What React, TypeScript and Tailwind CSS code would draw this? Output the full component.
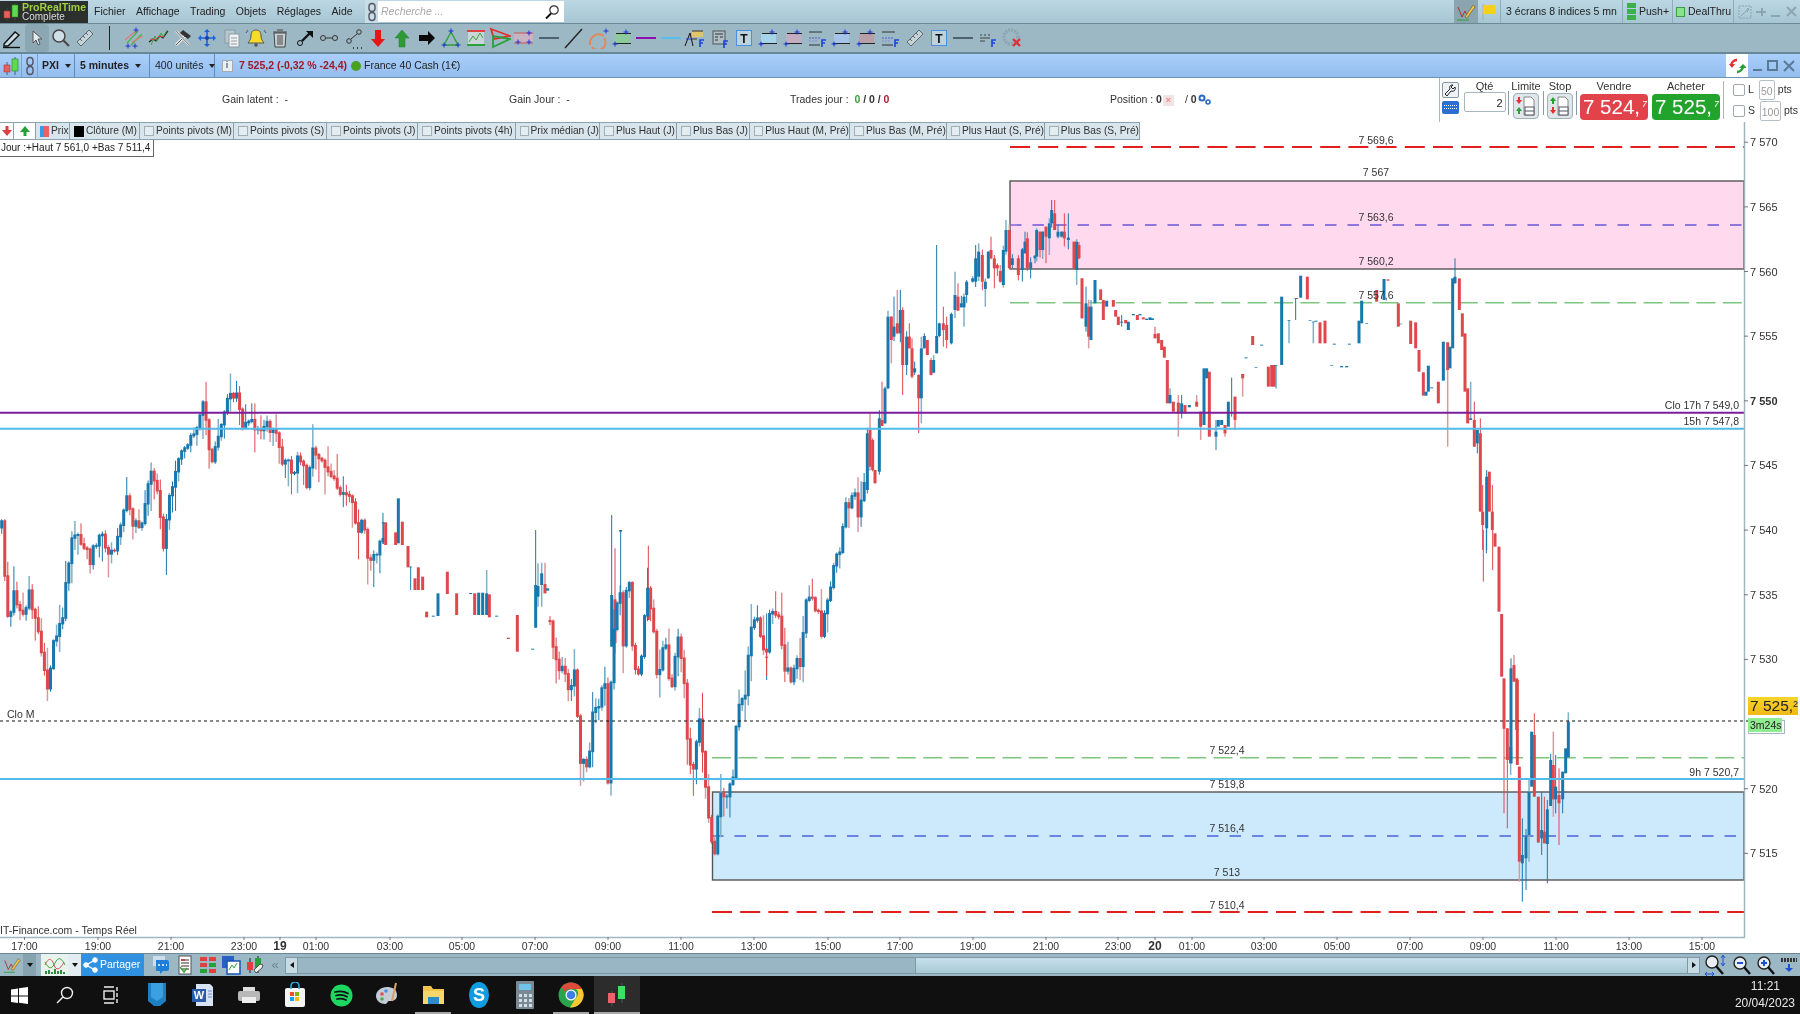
import React from "react";

type Raw = [number, number, number, number, number?, number?];
type Candle = { x: number; t: number; b: number; c: number; wt?: number; wb?: number; pale?: boolean };

let seed = 12345;
const rnd = () => {
  seed = (seed * 1664525 + 1013904223) % 4294967296;
  return seed / 4294967296;
};

const conv = (ox: number, oy: number, rows: Raw[], randomWick = false): Candle[] =>
  rows.map(([zx, t, b, c, wt, wb]) => {
    const y1 = oy + t / 3;
    const y2 = oy + b / 3;
    const r1 = rnd();
    const r2 = rnd();
    return {
      x: ox + zx / 3,
      t: y1,
      b: y2,
      c,
      wt: wt !== undefined ? oy + wt / 3 : randomWick ? y1 - r1 * r1 * 9 : undefined,
      wb: wb !== undefined ? oy + wb / 3 : randomWick ? y2 + r2 * r2 * 9 : undefined,
      pale: rnd() < 0.4,
    };
  });

const anchors: [number, number][] = [
  [1.7, 527], [5, 573], [8, 617], [15, 587], [22, 623], [30, 593], [37, 623], [48, 693], [53, 637], [62, 620], [67, 567], [73, 537], [83, 540], [90, 557], [100, 527], [110, 560], [117, 537], [127, 500], [133, 530], [143, 520], [150, 473], [158, 493], [163, 553], [170, 493], [180, 447], [193, 433], [204, 403], [210, 460], [217, 443], [227, 403], [235, 390], [242, 420], [257, 423], [277, 432], [283, 460], [293, 467], [303, 457], [307, 487], [313, 443], [328, 470], [340, 487], [350, 497], [358, 533], [363, 510], [368, 553], [375, 557], [385, 530],
];
const anchors2: [number, number][] = [
  [550, 620], [553, 650], [557, 663], [563, 667], [570, 700], [575, 667], [580, 757], [585, 767], [588, 770], [590, 747], [593, 700], [595, 713], [600, 697], [605, 683], [608, 780], [612, 647], [617, 597], [620, 593], [623, 643], [627, 580], [630, 580], [633, 660], [637, 663], [640, 680], [643, 640], [647, 587], [650, 607], [652, 603], [655, 640], [658, 697], [662, 647], [667, 642], [670, 690], [673, 673], [677, 637], [679, 630], [682, 663], [685, 687], [688, 747], [692, 780], [695, 747], [698, 720], [700, 727], [703, 753], [705, 780], [707, 797], [710, 840], [713, 843], [716, 867], [718, 813], [722, 790], [725, 810], [730, 790], [733, 773], [737, 720], [740, 697], [743, 700], [745, 697], [748, 650], [752, 620], [757, 612], [762, 637], [767, 657], [770, 613], [775, 610], [780, 623], [783, 670], [788, 663], [792, 693], [795, 650], [800, 673], [805, 602], [810, 603], [818, 607], [822, 633], [828, 598], [832, 583], [837, 547], [840, 557], [845, 500], [848, 510], [853, 483], [858, 523], [862, 500], [865, 480],
];

const fromAnchors = (list: [number, number][]): Candle[] => {
  const out: Candle[] = [];
  let prev = list[0][1];
  const x0 = list[0][0];
  const x1 = list[list.length - 1][0];
  let j = 0;
  for (let x = x0; x <= x1; x += 3.05) {
    while (j < list.length - 2 && list[j + 1][0] < x) j++;
    const [ax, ay] = list[j];
    const [bx, by] = list[j + 1];
    const y = ay + ((by - ay) * (x - ax)) / Math.max(bx - ax, 0.1) + (rnd() - 0.5) * 14;
    const t = Math.min(prev, y);
    const b = Math.max(prev, y) + 1.5;
    const r1 = rnd();
    const r2 = rnd();
    out.push({ x, t, b, c: y < prev ? 1 : 0, wt: t - r1 * r1 * r1 * 26 - 1, wb: b + r2 * r2 * r2 * 26 + 1, pale: rnd() < 0.45 });
    prev = y;
  }
  return out;
};

const candles: Candle[] = [
  ...fromAnchors(anchors),
  ...conv(0, 360, [
    [1157, 487, 555, 0], [1150, 487, 490, 1, undefined, 552], [1195, 415, 550, 1], [1187, 517, 555, 0], [1207, 485, 555, 0], [1224, 558, 622, 0], [1232, 620, 622, 1, undefined, 690], [1245, 655, 690, 0], [1255, 622, 690, 0], [1268, 650, 690, 0], [1280, 755, 772, 0], [1300, 767, 770, 1], [1314, 700, 768, 1], [1342, 635, 702, 0], [1370, 700, 765, 0], [1412, 699, 702, 1], [1424, 700, 765, 0], [1436, 698, 765, 1], [1448, 698, 765, 1], [1460, 700, 765, 1, 630], [1468, 703, 772, 0], [1490, 767, 770, 1],
  ]),
  ...conv(500, 480, [
    [25, 473, 477, 0], [52, 405, 515, 0], [98, 506, 509, 1], [107, 315, 443, 1, 150], [114, 318, 350, 1, 250, 380], [125, 280, 315, 1, 248, 380], [135, 312, 340, 0, 248], [143, 325, 332, 1],
    [335, 345, 500, 1, 105], [345, 358, 490, 0, 205, 520], [362, 150, 155, 1, undefined, 360], [445, 375, 420, 0, 197], [800, 530, 533, 1, 400, 600],
  ]),
  ...fromAnchors(anchors2),
  ...conv(820, 190, [
    [142, 730, 900, 1], [150, 720, 830, 0, 670], [158, 750, 840, 0], [165, 840, 880, 0], [178, 685, 845, 1], [186, 690, 708, 0, 575], [195, 595, 700, 1], [204, 380, 595, 1, 362], [214, 380, 450, 0, undefined, 520], [222, 410, 440, 1, 320], [232, 400, 430, 0, 300], [241, 360, 430, 1, 300], [248, 360, 525, 0, undefined, 615], [260, 440, 525, 1, undefined, 555], [268, 440, 475, 0, 400], [276, 475, 560, 0, 445, 565], [284, 535, 547, 1, 515], [296, 555, 625, 0, undefined, 730], [304, 475, 625, 1, 440, 700], [313, 438, 475, 1, 430], [322, 450, 495, 0], [333, 510, 555, 0], [341, 510, 548, 1], [350, 438, 490, 1, 165], [358, 400, 438, 1], [370, 400, 420, 0, 350, 470], [380, 405, 450, 0, 380, 475], [394, 372, 460, 1], [405, 315, 360, 1, 245], [414, 320, 362, 0, 280], [424, 340, 352, 1], [432, 320, 352, 1, undefined, 410], [440, 275, 315, 1], [458, 265, 275, 1], [467, 205, 275, 1, 165], [476, 185, 260, 1, 160], [487, 195, 275, 0], [496, 275, 297, 1, 265, 350], [505, 185, 265, 1], [513, 180, 205, 0, 140], [523, 205, 235, 0, 195, 295], [532, 225, 235, 0], [541, 243, 275, 0], [550, 180, 285, 1], [558, 120, 185, 1, 90], [568, 120, 235, 0], [577, 205, 225, 1], [595, 205, 255, 0], [607, 178, 240, 1, undefined, 275], [615, 155, 190, 1, 125], [622, 145, 235, 0], [632, 217, 235, 1, undefined, 265], [645, 197, 205, 1], [650, 120, 200, 1], [660, 125, 180, 0], [668, 125, 180, 1], [678, 110, 140, 0, undefined, 220], [688, 100, 145, 1, undefined, 195], [695, 60, 100, 1, 30], [704, 70, 120, 0, 30], [714, 125, 140, 1, undefined, 145], [725, 125, 140, 1], [733, 125, 145, 0, 70], [745, 143, 150, 1, 70, 178], [762, 155, 235, 0], [770, 155, 240, 1, undefined, 285], [777, 165, 205, 0], [786, 265, 385, 0], [798, 340, 410, 1, 290], [806, 350, 440, 0, undefined, 475], [813, 350, 450, 1],
  ], true),
  ...conv(980, 130, [
    [345, 450, 520, 1], [362, 478, 510, 0], [370, 510, 570, 0], [380, 512, 530, 1], [400, 510, 530, 0], [407, 540, 560, 0], [415, 560, 585, 0], [425, 575, 578, 1, 555, 590], [437, 570, 580, 0], [445, 575, 600, 1], [460, 552, 556, 1], [472, 555, 570, 0], [480, 552, 556, 1], [490, 562, 568, 0], [500, 566, 570, 1], [510, 562, 570, 1], [517, 565, 570, 1],
    [525, 612, 625, 0, 590], [535, 610, 640, 0], [545, 630, 660, 0], [553, 650, 683, 0], [562, 690, 820, 0], [570, 795, 820, 1, 775], [580, 815, 845, 0], [595, 818, 850, 0, 795, 920], [605, 820, 850, 1, 795, 865], [615, 825, 850, 0], [628, 825, 832, 1], [650, 815, 830, 0, 795], [662, 845, 890, 0, undefined, 930], [672, 715, 885, 1], [680, 715, 745, 1], [688, 725, 920, 0], [708, 905, 920, 1, 870, 960], [715, 870, 890, 1], [725, 870, 885, 1], [735, 885, 910, 0, undefined, 920], [745, 815, 890, 1], [765, 800, 870, 0, undefined, 900], [788, 732, 745, 0, undefined, 800], [755, 798, 799, 1, 743, 860], [818, 618, 645, 0], [845, 644, 647, 1], [798, 682, 685, 1], [828, 711, 713, 1], [865, 710, 770, 0], [875, 705, 770, 0], [882, 705, 770, 0], [888, 705, 707, 1, undefined, 775], [905, 500, 705, 1], [950, 504, 507, 0], [947, 505, 507, 1, undefined, 570], [927, 570, 572, 1, undefined, 640], [962, 437, 503, 1], [982, 440, 508, 0], [990, 571, 573, 1], [1000, 575, 577, 1, undefined, 640], [1008, 572, 575, 1], [1020, 577, 640, 0], [1035, 572, 640, 0], [1063, 641, 644, 1], [1108, 641, 644, 1], [1055, 706, 708, 1], [1085, 708, 712, 1], [1100, 708, 712, 1], [1137, 572, 640, 1], [1145, 512, 580, 1], [1160, 579, 581, 1], [1190, 480, 515, 0], [1212, 447, 510, 1], [1224, 448, 452, 0], [1255, 520, 590, 0], [1262, 581, 583, 1], [1292, 572, 642, 0], [1307, 577, 655, 0], [1317, 660, 725, 0], [1330, 727, 797, 0], [1338, 785, 797, 1], [1345, 707, 785, 1], [1355, 772, 775, 1], [1375, 755, 820, 0], [1390, 635, 752, 1], [1403, 637, 720, 0, undefined, 950], [1410, 650, 715, 1], [1418, 445, 655, 1], [1425, 440, 460, 1, 385], [1438, 445, 540, 0], [1447, 550, 620, 0], [1455, 610, 785, 0],
  ]),
  ...conv(1420, 250, [
    [143, 415, 520, 0], [152, 505, 510, 1, 395], [163, 510, 590, 0, 455], [172, 540, 580, 1, undefined, 610], [181, 550, 785, 0, 505], [188, 785, 825, 0, 705, 900], [200, 680, 835, 1, 660, 900], [208, 665, 785, 0], [217, 785, 840, 0, 705],
  ]),
  ...conv(1480, 530, [
    [10, 0, 1, 0, undefined, 155], [19, 0, 1, 1, undefined, 70], [38, 0, 1, 0, undefined, 120], [45, 10, 50, 0], [57, 50, 245, 0], [65, 252, 440, 0], [72, 445, 595, 0], [93, 415, 700, 1, 385], [102, 405, 455, 0, 375], [110, 445, 600, 0],
  ]),
  ...conv(1400, 680, [
    [312, 145, 147, 0, undefined, 400], [322, 145, 240, 0, undefined, 445], [332, 200, 250, 1, undefined, 285], [352, 0, 255, 0], [358, 260, 545, 0, undefined, 605], [367, 525, 550, 1, 415, 665], [378, 470, 535, 1, 447, 630], [387, 335, 465, 1, 295, 545], [395, 155, 320, 1], [403, 165, 350, 0, 100], [415, 350, 488, 0], [425, 450, 475, 1, 335, 525], [433, 455, 490, 0, 350], [442, 388, 492, 1, 360, 610], [452, 240, 378, 1, 222], [460, 255, 358, 0, 155, 410], [467, 320, 358, 1, 225, 400], [477, 345, 370, 0, 265, 495], [488, 275, 358, 1, undefined, 400], [497, 205, 280, 1], [505, 125, 232, 1, 97],
  ]),
];

const Plus = ({ x, y }: { x: number; y: number }) => (
  <path d={`M${x - 2.5} ${y}h5M${x} ${y - 2.5}v5`} stroke="#1a35d8" strokeWidth="1" fill="none" />
);
const F = ({ x = 16, y = 20 }: { x?: number; y?: number }) => (
  <path d={`M${x} ${y}v-7h4M${x} ${y - 4}h3`} stroke="#1a45d8" strokeWidth="1.6" fill="none" />
);

const Icon = ({ children, s = 22 }: { children: React.ReactNode; s?: number }) => (
  <svg width={s} height={s} viewBox="0 0 22 22" fill="none">
    {children}
  </svg>
);

const rectIcon = (fill: string, key: string) => (
  <Icon key={key}>
    <rect x="4" y="7" width="15" height="9" fill={fill} />
    <path d="M3 16.5h17M5 6.5h15" stroke="#222" />
    <Plus x={15} y={5} />
    <Plus x={4} y={17} />
  </Icon>
);
const dashF = (key: string) => (
  <Icon key={key}>
    <path d="M3 5h13M3 18h11" stroke="#333" />
    <path d="M3 11h12" stroke="#4a5fd8" strokeDasharray="2 1" />
    <path d="M3 14h9" stroke="#7a8fd8" strokeDasharray="2 1" />
    <F />
  </Icon>
);
const tBox = (key: string) => (
  <Icon key={key}>
    <rect x="3.5" y="3.5" width="15" height="15" fill="#bcd2dc" stroke="#4a90e0" />
    <text x="11" y="15.5" textAnchor="middle" fontSize="12" fontWeight="700" fontFamily="Liberation Sans" fill="#111">T</text>
  </Icon>
);
const ruler = (key: string) => (
  <Icon key={key}>
    <path d="M3 15L15 3l4 4L7 19z" fill="#c3d3da" stroke="#666" />
    <path d="M6 12l2 2M9 9l2 2M12 6l2 2" stroke="#666" />
  </Icon>
);
const hLine = (key: string, color: string, w = 2) => (
  <Icon key={key}>
    <path d="M1 11h20" stroke={color} strokeWidth={w} />
  </Icon>
);

const toolbar: React.ReactNode[] = [
  <Icon key="a"><path d="M3 17L14 5l4 3L7 19H3z" stroke="#111" strokeWidth="1.4" fill="#c9dbe3" /><path d="M2 20.5h17" stroke="#111" strokeWidth="1.4" /></Icon>,
  <div key="b" className="w-[24px] h-[28px] bg-[#8ca7b4] rounded-sm flex items-center justify-center">
    <svg width="14" height="18" viewBox="0 0 14 18"><path d="M3 2v12l3-3 2 5 2-1-2-5h4z" fill="#e4ecf0" stroke="#555" /></svg>
  </div>,
  <Icon key="c"><circle cx="9" cy="9" r="6" stroke="#444" strokeWidth="1.5" fill="#cfdfe6" /><path d="M13.5 13.5L19 19" stroke="#444" strokeWidth="2" /></Icon>,
  ruler("d"),
  <div key="sep" className="w-px h-[24px] bg-[#222]" />,
  <Icon key="e"><path d="M4 16L15 4M8 18L19 7" stroke="#49b04a" strokeWidth="1.2" /><path d="M2 13L14 3M9 15L20 9" stroke="#e07a7a" strokeWidth="1.2" /><Plus x={5} y={19} /><Plus x={12} y={19} /><Plus x={13} y={3} /></Icon>,
  <Icon key="f"><path d="M1 15l4-3 3 2 4-5 3 2 5-7" stroke="#222" strokeWidth="1.2" /><path d="M3 18l4-9 2 5 4-8 2 4 4-7" stroke="#3da33d" /><path d="M2 12l5 1 4-4 5 1" stroke="#d84a4a" /></Icon>,
  <Icon key="g"><path d="M4 18L14 8" stroke="#e8e8e8" strokeWidth="3" /><path d="M4 18L14 8" stroke="#555" strokeWidth="1" /><path d="M11 3l8 6-3 3-8-6z" fill="#333" /><path d="M4 4l13 14" stroke="#ddd" strokeWidth="2.5" /><path d="M4 4l13 14" stroke="#666" strokeWidth=".8" /></Icon>,
  <Icon key="h"><path d="M11 2l-3 3h6zM11 20l-3-3h6zM2 11l3-3v6zM20 11l-3-3v6z" fill="#1a63d8" /><path d="M11 4v14M4 11h14" stroke="#1a63d8" strokeWidth="1.6" /><circle cx="11" cy="11" r="2" fill="#1a3fa8" /></Icon>,
  <Icon key="i"><rect x="4" y="3" width="10" height="13" fill="#b8c8d0" stroke="#8a9aa2" /><rect x="8" y="7" width="10" height="13" fill="#eef2f4" stroke="#8a9aa2" /><path d="M10 11h6M10 14h6M10 17h6" stroke="#999" /></Icon>,
  <Icon key="j"><path d="M11 3c-4 0-5 3-5 6 0 4-2 5-3 7h16c-1-2-3-3-3-7 0-3-1-6-5-6z" fill="#f8dc2a" stroke="#555" /><circle cx="11" cy="18" r="1.8" fill="#555" /><path d="M1 6l2-3M21 6l-2-3" stroke="#555" /></Icon>,
  <Icon key="k"><path d="M5 6h12l-1 14H6z" fill="#c8d0d4" stroke="#444" /><path d="M4 5h14M8 3h6M9 8v10M11 8v10M13 8v10" stroke="#444" /></Icon>,
  <Icon key="l"><path d="M8 14L17 5" stroke="#111" strokeWidth="2.4" /><path d="M12 4h7v7z" fill="#111" /><circle cx="6" cy="16" r="2.5" stroke="#111" /></Icon>,
  <Icon key="m"><circle cx="5" cy="11" r="2.5" stroke="#333" /><circle cx="17" cy="11" r="2.5" stroke="#333" /><path d="M8 11h6" stroke="#333" /></Icon>,
  <Icon key="n"><circle cx="6" cy="14" r="2.3" stroke="#333" /><circle cx="16" cy="5" r="2.3" stroke="#333" /><path d="M8 12l6-5" stroke="#333" /><path d="M10 21h1M14 21h1M18 21h1" stroke="#222" strokeWidth="1.4" /></Icon>,
  <Icon key="o"><path d="M8 3h6v9h4l-7 8-7-8h4z" fill="#e51616" /></Icon>,
  <Icon key="p"><path d="M8 20h6v-9h4l-7-8-7 8h4z" fill="#2d9a35" stroke="#1f7c28" strokeWidth=".5" /></Icon>,
  <Icon key="q"><path d="M3 8h9V4l7 7-7 7v-4H3z" fill="#0a0a0a" /></Icon>,
  <Icon key="r"><path d="M11 5L4 18h14z" stroke="#2da03a" strokeWidth="1.4" /><Plus x={11} y={4} /><Plus x={4} y={18} /><Plus x={18} y={18} /></Icon>,
  <Icon key="s"><rect x="3" y="4" width="16" height="14" fill="#c9d5d6" /><path d="M2 4h18" stroke="#e04040" strokeWidth="2" /><path d="M2 18h18" stroke="#2da03a" strokeWidth="2" /><path d="M4 15l4-6 3 4 4-7 3 5" stroke="#3da33d" /></Icon>,
  <Icon key="t"><path d="M2 2l19 7-16 3z" fill="none" stroke="#e03030" strokeWidth="1.8" /><path d="M4 20l17-8-17-3z" fill="none" stroke="#28a038" strokeWidth="1.8" /></Icon>,
  <Icon key="u"><rect x="1" y="6" width="19" height="10" fill="#c8b4c0" /><path d="M1 6h19M1 16h19" stroke="#d05050" /><Plus x={16} y={6} /><Plus x={5} y={15} /><Plus x={16} y={15} /></Icon>,
  hLine("v", "#4d6470", 2),
  <Icon key="w"><path d="M3 21L20 2" stroke="#222" strokeWidth="1.4" /></Icon>,
  <Icon key="x"><path d="M3 18a9 9 0 0 1 14-9" stroke="#e0895a" strokeWidth="2" /><path d="M5 20a7 7 0 0 0 12-9" stroke="#e0895a" strokeWidth="2" /><Plus x={19} y={4} /></Icon>,
  rectIcon("#8ecb9c", "y"),
  hLine("z", "#8a10b0", 2),
  hLine("aa", "#55c0ee", 2),
  <Icon key="ab"><path d="M1 19l5-13 3 13" stroke="#111" strokeWidth="1" /><rect x="8" y="4" width="11" height="6" fill="#dfc66a" /><path d="M8 4h11M8 12h5" stroke="#333" /><path d="M2 12h6" stroke="#1a45d8" /><F /></Icon>,
  <Icon key="ac"><rect x="4" y="4" width="12" height="13" fill="#aebec6" stroke="#555" /><path d="M6 7h8M6 10h3M11 10h3M6 13h3" stroke="#333" /><F y={21} x={15} /></Icon>,
  tBox("ad"),
  rectIcon("#a6d4ea", "ae"),
  rectIcon("#c4adc0", "af"),
  dashF("ag"),
  rectIcon("#a6c4ea", "ah"),
  rectIcon("#b8a0a8", "ai"),
  dashF("aj"),
  ruler("ak"),
  tBox("al"),
  hLine("am", "#4d6470", 2),
  <Icon key="an"><path d="M3 8h2M7 8h2M11 8h2M3 11h10M3 14h5" stroke="#444" /><F x={15} y={20} /></Icon>,
  <Icon key="ao"><circle cx="10" cy="10" r="7" stroke="#8fa5af" strokeWidth="3.5" strokeDasharray="2 1" fill="none" /><path d="M12 12l7 7M19 12l-7 7" stroke="#e02f35" strokeWidth="2.4" /></Icon>,
];

const legendTabs: [string, number][] = [
  ["Points pivots (M)", 94],
  ["Points pivots (S)", 93],
  ["Points pivots (J)", 91],
  ["Points pivots (4h)", 98],
  ["Prix médian (J)", 84],
  ["Plus Haut (J)", 77],
  ["Plus Bas (J)", 73],
  ["Plus Haut (M, Pré)", 100],
  ["Plus Bas (M, Pré)", 97],
  ["Plus Haut (S, Pré)", 98],
  ["Plus Bas (S, Pré)", 95],
];

const priceY = (p: number) => 788.7 - (p - 7520) * 12.93;
const prices = [7570, 7565, 7560, 7555, 7550, 7545, 7540, 7535, 7530, 7520, 7515];

const timeLabels: [string, number, boolean?][] = [
  ["17:00", 24.5], ["19:00", 98], ["21:00", 171], ["23:00", 244], ["19", 280, true], ["01:00", 316], ["03:00", 390], ["05:00", 462], ["07:00", 535], ["09:00", 608], ["11:00", 681], ["13:00", 754], ["15:00", 828], ["17:00", 900], ["19:00", 973], ["21:00", 1046], ["23:00", 1118], ["20", 1155, true], ["01:00", 1192], ["03:00", 1264], ["05:00", 1337], ["07:00", 1410], ["09:00", 1483], ["11:00", 1556], ["13:00", 1629], ["15:00", 1702],
];

const annotations: [string, number, number, "middle" | "end" | "start"][] = [
  ["7 569,6", 1376, 144, "middle"],
  ["7 567", 1376, 176, "middle"],
  ["7 563,6", 1376, 221, "middle"],
  ["7 560,2", 1376, 265, "middle"],
  ["7 557,6", 1376, 299, "middle"],
  ["Clo 17h 7 549,0", 1739, 409, "end"],
  ["15h 7 547,8", 1739, 425, "end"],
  ["Clo M", 7, 718, "start"],
  ["7 522,4", 1227, 754, "middle"],
  ["9h 7 520,7", 1739, 776, "end"],
  ["7 519,8", 1227, 788, "middle"],
  ["7 516,4", 1227, 832, "middle"],
  ["7 513", 1227, 876, "middle"],
  ["7 510,4", 1227, 909, "middle"],
  ["IT-Finance.com - Temps Réel", 0, 934, "start"],
];

function Chart() {
  return (
    <svg width="1800" height="831" viewBox="0 122 1800 831" className="block" fontFamily="'Liberation Sans', Arial, sans-serif">
      <rect x="1010" y="181" width="734" height="88" fill="#ffd9ee" stroke="#555" strokeWidth="1.4" />
      <rect x="712.5" y="792" width="1031.5" height="88" fill="#cdeafd" stroke="#555" strokeWidth="1.4" />
      <path d="M1010 147H1744M712 912H1744" stroke="#e01f1f" strokeWidth="2" strokeDasharray="20 8.2" />
      <path d="M1010 225H1744" stroke="#6a55d6" strokeWidth="1.3" strokeDasharray="11.5 11" />
      <path d="M712 836H1740" stroke="#4a63d8" strokeWidth="1.3" strokeDasharray="11.5 11" />
      <path d="M1010 302.7H1744M712 757.7H1744" stroke="#7fc67f" strokeWidth="1.4" strokeDasharray="19 7.4" />
      {candles.map((c, i) => {
        const col = c.c ? "#1878ad" : "#de474c";
        const top = c.wt ?? c.t;
        const bot = c.wb ?? c.b;
        return (
          <g key={i}>
            {(top < c.t || bot > c.b) && (
              <line x1={c.x} x2={c.x} y1={top} y2={bot} stroke={c.pale ? (c.c ? "#7fb0c6" : "#d89a9c") : col} strokeWidth={c.pale ? 1.5 : 1} />
            )}
            {c.b - c.t > 0.5 && <rect x={c.x - 1.5} y={c.t} width={3} height={c.b - c.t} fill={col} />}
          </g>
        );
      })}
      <path d="M0 412.7H1744" stroke="#7b1e9e" strokeWidth="2" />
      <path d="M0 428.7H1744M0 779H1744" stroke="#52bbea" strokeWidth="2" />
      <path d="M0 721H1748" stroke="#111" strokeWidth="1" strokeDasharray="3 3" />
      {annotations.map(([t, x, y, a], i) => (
        <text key={i} x={x} y={y} fontSize="10.5" fill="#333" textAnchor={a}>{t}</text>
      ))}
      <path d="M1744.5 122V937.5H0" stroke="#a3b6bf" strokeWidth="1.5" fill="none" />
      {prices.map((p) => (
        <g key={p}>
          <path d={`M1744 ${priceY(p)}h4`} stroke="#777" />
          <text x="1750" y={priceY(p) + 4} fontSize="11" fontWeight={p === 7550 ? 700 : 400} fill="#333">
            {`${String(p).charAt(0)} ${String(p).slice(1)}`}
          </text>
        </g>
      ))}
      {timeLabels.map(([t, x, b], i) => (
        <g key={i}>
          <path d={`M${x} 937v3`} stroke="#777" />
          <text x={x} y={950} fontSize={b ? 12 : 10.5} fontWeight={b ? 700 : 400} fill="#333" textAnchor="middle">{t}</text>
        </g>
      ))}
    </svg>
  );
}

const BarCandle = () => (
  <svg width="18" height="20" viewBox="0 0 18 20">
    <path d="M5 6v13M13 1v18" stroke="#444" strokeWidth=".8" />
    <rect x="2" y="9" width="6" height="7" fill="#e8605a" stroke="#a33" strokeWidth=".6" />
    <rect x="10" y="3" width="6" height="12" fill="#62d84a" stroke="#282" strokeWidth=".6" />
  </svg>
);

const Chain = () => (
  <svg width="10" height="20" viewBox="0 0 10 20" fill="none" stroke="#556">
    <rect x="2" y="1.5" width="6" height="8" rx="3" strokeWidth="1.4" />
    <rect x="2" y="10.5" width="6" height="8" rx="3" strokeWidth="1.4" />
  </svg>
);

const Caret = () => <span className="inline-block ml-[6px] w-0 h-0 border-x-[3.5px] border-x-transparent border-t-[4px] border-t-[#222] align-middle" />;

function TopBar() {
  return (
    <div className="h-[24px] flex items-stretch bg-linear-to-b from-[#bcd7e3] to-[#a6c6d3] text-[10.5px] text-[#222] border-b border-[#6c8997]">
      <div className="w-[88px] shrink-0 bg-[#2c302d] flex items-center pl-[2px] mt-[1px] gap-[2px] overflow-hidden">
        <BarCandle />
        <div className="leading-[10px]">
          <div className="text-[#9fcf3e] text-[10.5px] font-semibold">ProRealTime</div>
          <div className="text-[#d8d8d8] text-[10px]">Complete</div>
        </div>
      </div>
      <div className="w-[271px] shrink-0 flex items-center gap-[10.5px] ml-[6px]">
        <span>Fichier</span><span>Affichage</span><span>Trading</span><span>Objets</span><span>Réglages</span><span>Aide</span>
      </div>
      <div className="w-[13px] shrink-0 flex items-center justify-center bg-[#c9dde6]"><Chain /></div>
      <div className="w-[186px] shrink-0 bg-white my-[1px] flex items-center justify-between px-[3px]">
        <span className="italic text-[#a8a8a8] text-[10.5px]">Recherche ...</span>
        <svg width="16" height="16" viewBox="0 0 16 16" fill="none" className="mr-[1px]"><circle cx="10" cy="6" r="4.2" stroke="#333" strokeWidth="1.2" /><path d="M7 9.5L2 14.5" stroke="#111" strokeWidth="2" /></svg>
      </div>
      <div className="flex-1" />
      <div className="w-[24px] bg-[#8aa5b0] flex items-center justify-center">
        <svg width="22" height="20" viewBox="0 0 22 20" fill="none"><path d="M3 5l4 10 3-6 3 6" stroke="#b03030" /><path d="M2 18h12" stroke="#2da03a" /><path d="M10 15l8-12 2 2-8 11z" fill="#f2c53a" stroke="#555" strokeWidth=".6" /></svg>
      </div>
      <div className="w-[23px] flex items-center justify-center border-r border-[#8eabb7]">
        <svg width="16" height="20" viewBox="0 0 16 20"><path d="M2 2v16" stroke="#aaa" /><path d="M2 3h12v9H2z" fill="#f5cf18" /></svg>
      </div>
      <div className="w-[122px] flex items-center justify-center border-r border-[#8eabb7]">3 écrans 8 indices 5 mn</div>
      <div className="w-[50px] flex items-center pl-[4px] border-r border-[#8eabb7] gap-[3px]">
        <div className="w-[9px] h-[18px] flex flex-col gap-px">
          <div className="flex-1 bg-[#3db04a]" /><div className="flex-1 bg-[#3db04a]" /><div className="flex-1 bg-[#3db04a]" />
        </div>
        <span>Push+</span>
      </div>
      <div className="w-[61px] flex items-center pl-[3px] border-r border-[#8eabb7] gap-[3px]">
        <div className="w-[9px] h-[10px] bg-[#8ee08e] border border-[#3d9a4a]" />
        <span>DealThru</span>
      </div>
      <div className="w-[66px] flex items-center gap-[3px] pl-[4px] text-[#8ba5b1]">
        <svg width="14" height="14" viewBox="0 0 14 14" fill="none" stroke="#8ba5b1"><rect x="1" y="1" width="12" height="12" strokeDasharray="2 1" /><path d="M3 11l5-5 2-3 1 1-2 3" /></svg>
        <svg width="12" height="12" viewBox="0 0 12 12" fill="#8ba5b1"><path d="M1 5h5V2h2v3h3v2H8v3H6V7H1z" /></svg>
        <svg width="12" height="12" viewBox="0 0 12 12" fill="#8ba5b1"><path d="M1 9h9v2H1z" /></svg>
        <svg width="13" height="13" viewBox="0 0 13 13" stroke="#8ba5b1" strokeWidth="2"><path d="M2 2l9 9M11 2l-9 9" /></svg>
      </div>
    </div>
  );
}

function ToolBar() {
  return (
    <div className="h-[30px] bg-[#9db8c5] flex items-center border-b-2 border-[#6a8795]">
      {toolbar.map((n, i) => (
        <div key={i} className="w-[24.4px] flex items-center justify-center shrink-0">{n}</div>
      ))}
    </div>
  );
}

function InstrumentBar() {
  return (
    <div className="h-[24px] bg-linear-to-b from-[#a9cffb] to-[#93bdee] border-b border-[#6e95b5] flex items-stretch text-[10.5px] text-[#222] whitespace-nowrap">
      <div className="w-[22px] flex items-center justify-center border-r border-[#7ba2c8]"><BarCandle /></div>
      <div className="w-[16px] flex items-center justify-center border-r border-[#7ba2c8]"><Chain /></div>
      <div className="w-[37px] flex items-center pl-[4px] border-r border-[#5f8bb5] font-bold">PXI<Caret /></div>
      <div className="w-[75px] flex items-center pl-[5px] border-r border-[#5f8bb5] font-bold">5 minutes<Caret /></div>
      <div className="w-[65px] flex items-center pl-[5px] border-r border-[#5f8bb5]">400 unités<Caret /></div>
      <div className="w-[24px] flex items-center justify-center">
        <div className="w-[11px] h-[12px] bg-[#e6eef6] border border-[#aaa] text-[9px] font-bold text-[#667] flex items-center justify-center">i</div>
      </div>
      <div className="flex items-center font-semibold text-[#a01a28]">7 525,2 (-0,32 % -24,4)</div>
      <div className="w-[10px] h-[10px] rounded-full bg-[#4aa020] self-center ml-[4px] mr-[3px]" />
      <div className="flex items-center">France 40 Cash (1€)</div>
      <div className="flex-1" />
      <div className="w-[22px] bg-white flex items-center justify-center">
        <svg width="18" height="18" viewBox="0 0 18 18" fill="none"><path d="M9 3a6 6 0 0 0-6 6" stroke="#e03030" strokeWidth="2.4" /><path d="M1 7l3 4 3-4z" fill="#e03030" /><path d="M9 15a6 6 0 0 0 6-6" stroke="#28a038" strokeWidth="2.4" /><path d="M11 11l4-4 4 4z" fill="#28a038" /></svg>
      </div>
      <div className="w-[52px] flex items-center gap-[5px] pl-[5px]">
        <div className="w-[9px] h-[2px] bg-[#5a7a95] mt-[9px]" />
        <div className="w-[11px] h-[11px] border-2 border-[#5a7a95]" />
        <svg width="12" height="12" viewBox="0 0 12 12" stroke="#5a7a95" strokeWidth="2"><path d="M1 1l10 10M11 1L1 11" /></svg>
      </div>
    </div>
  );
}

const SideBtn = ({ top }: { top: boolean }) => (
  <div className="w-[26px] h-[26px] bg-[#dfe7ea] border border-[#9fb0b8] rounded-sm flex items-center justify-center">
    <svg width="22" height="22" viewBox="0 0 22 22" fill="none">
      <path d="M9 2h7l3 3v15H9z" stroke="#888" fill="#fff" />
      <rect x="10" y="12" width="9" height="8" fill="#fff" stroke="#556" />
      <path d="M10 16h9" stroke="#556" />
      <path d={top ? "M4 2l-3 4h2v3h2V6h2z" : "M4 9l-3-4h2V2h2v3h2z"} fill={top ? "#28a038" : "#e03030"} />
      <path d={top ? "M4 19l-3-4h2v-3h2v3h2z" : "M4 12l-3 4h2v3h2v-3h2z"} fill={top ? "#e03030" : "#28a038"} />
    </svg>
  </div>
);

const PriceBtn = ({ label, big, small, cls }: { label: string; big: string; small: string; cls: string }) => (
  <div className="w-[68px] flex flex-col items-center">
    <div className="h-[15px] text-[11px] text-[#333] leading-[15px]">{label}</div>
    <div className={`w-full h-[26px] rounded-sm text-white text-[20.5px] leading-[26px] pl-[3px] whitespace-nowrap ${cls}`}>
      {big}<span className="relative -top-[7px] text-[9px] italic ml-[2px]">{small}</span>
    </div>
  </div>
);

function InfoBar() {
  return (
    <div className="h-[44px] bg-white flex items-stretch text-[10.5px] text-[#333]">
      <div className="w-[1439px] relative flex items-center">
        <div className="ml-[222px] w-[287px]">Gain latent :&nbsp; -</div>
        <div className="w-[281px]">Gain Jour :&nbsp; -</div>
        <div className="w-[320px]">Trades jour :&nbsp; <span className="text-[#3aa03a] font-bold">0</span> <b>/</b> <b>0</b> <b>/</b> <span className="text-[#a82030] font-bold">0</span></div>
        <div className="flex items-center">Position :&nbsp; <b>0</b>
          <span className="w-[11px] h-[11px] bg-[#f2e4e4] text-[#e88] text-[9px] leading-[11px] text-center mx-[1px] font-bold">×</span>
          <span className="ml-[10px]">/ <b>0</b></span>
          <svg width="14" height="12" viewBox="0 0 14 12" fill="none" className="ml-[1px]"><circle cx="4" cy="4" r="2.5" stroke="#2a6ac0" strokeWidth="2" /><circle cx="10" cy="8" r="2" stroke="#2a6ac0" strokeWidth="1.6" /></svg>
        </div>
      </div>
      <div className="flex-1 border-l border-[#a9b9c1] flex items-stretch pl-[2px] pt-[1px]">
        <div className="w-[19px] flex flex-col gap-[3px] pt-[3px]">
          <div className="w-[17px] h-[16px] bg-[#eef2f4] border border-[#8898a0] rounded-[2px] flex items-center justify-center">
            <svg width="13" height="13" viewBox="0 0 13 13" fill="none"><path d="M3 12l-2-2 5-5c-1-2 0-4 2-4l1 0-2 2 2 2 2-2c1 3-1 5-4 4z" stroke="#222" /></svg>
          </div>
          <div className="w-[17px] h-[13px] bg-[#2b6fd0] rounded-[2px] flex flex-col justify-center items-center gap-px">
            <div className="w-[13px] h-[2px] border-t border-dotted border-white" />
            <div className="w-[13px] h-[2px] border-t border-dotted border-white" />
          </div>
        </div>
        <div className="w-[47px] flex flex-col items-center">
          <div className="h-[13px] leading-[14px] text-[11px]">Qté</div>
          <div className="w-[42px] h-[20px] border border-[#a8b6bd] rounded-[2px] text-right pr-[2px] text-[11px] leading-[20px] text-[#222]">2</div>
        </div>
        <div className="w-px h-[24px] bg-[#8a9aa2] mt-[12px]" />
        <div className="w-[34px] flex flex-col items-center">
          <div className="h-[14px] text-[11px] leading-[14px]">Limite</div>
          <SideBtn top={false} />
        </div>
        <div className="w-px h-[24px] bg-[#8a9aa2] mt-[12px]" />
        <div className="w-[32px] flex flex-col items-center">
          <div className="h-[14px] text-[11px] leading-[14px]">Stop</div>
          <SideBtn top />
        </div>
        <div className="w-px h-[24px] bg-[#8a9aa2] mt-[12px] mr-[3px]" />
        <PriceBtn label="Vendre" big="7 524," small="7" cls="bg-[#e2434b]" />
        <div className="w-[4px]" />
        <PriceBtn label="Acheter" big="7 525," small="7" cls="bg-[#22a32c]" />
        <div className="w-px h-[38px] bg-[#a8b6bd] mt-[2px] ml-[3px] mr-[9px]" />
        <div className="flex flex-col text-[10.5px] text-[#333]">
          <div className="h-[21px] flex items-center">
            <div className="w-[12px] h-[12px] border border-[#a0a8ad] rounded-[2px] mr-[3px]" />L
            <div className="w-[16px] h-[20px] border border-[#b5c0c6] rounded-[2px] ml-[5px] text-[#999] text-[10.5px] leading-[20px] text-center">50</div>
            <span className="ml-[3px]">pts</span>
          </div>
          <div className="h-[21px] flex items-center">
            <div className="w-[12px] h-[12px] border border-[#a0a8ad] rounded-[2px] mr-[3px]" />S
            <div className="w-[21px] h-[20px] border border-[#b5c0c6] rounded-[2px] ml-[5px] text-[#999] text-[10.5px] leading-[20px] text-center">100</div>
            <span className="ml-[3px]">pts</span>
          </div>
        </div>
      </div>
    </div>
  );
}

const Tab = ({ w, children }: { w: number; children: React.ReactNode }) => (
  <div style={{ width: w }} className="h-full border-r border-[#8aa2ae] flex items-center pl-[4px] gap-[2px] whitespace-nowrap overflow-hidden shrink-0">{children}</div>
);

function Legend() {
  return (
    <div className="absolute left-0 top-0 flex flex-col items-start">
      <div className="h-[18px] flex bg-[#d8e5ec] border-y border-[#8aa2ae] text-[10.2px] text-[#333]">
        <div className="w-[14px] border-r border-[#8aa2ae] flex items-center justify-center bg-white">
          <svg width="10" height="10" viewBox="0 0 10 10"><path d="M3.5 0h3v4H10L5 10 0 4h3.5z" fill="#e04040" /></svg>
        </div>
        <div className="w-[22px] border-r border-[#8aa2ae] flex items-center justify-center bg-white">
          <svg width="10" height="10" viewBox="0 0 10 10"><path d="M3.5 10h3V6H10L5 0 0 6h3.5z" fill="#28a038" /></svg>
        </div>
        <Tab w={34}>
          <span className="w-[9px] h-[11px] bg-linear-to-r from-[#3a9ae0] from-50% to-[#f06060] to-50%" />Prix
        </Tab>
        <Tab w={70}>
          <span className="w-[10px] h-[11px] bg-black" />Clôture (M)
        </Tab>
        {legendTabs.map(([t, w]) => (
          <Tab key={t} w={w}>
            <span className="w-[10px] h-[10px] border border-[#a0aeb6] bg-[#e3ecf1]" />{t}
          </Tab>
        ))}
      </div>
      <div className="h-[17px] bg-white border-r border-b border-[#666] text-[10px] text-[#222] leading-[16px] pl-px pr-[3px]">Jour :+Haut 7 561,0 +Bas 7 511,4</div>
    </div>
  );
}

function Tags() {
  return (
    <>
      <div className="absolute left-[1748px] top-[598px] w-[37px] h-[14px] bg-white border border-[#a3b6bf]" />
      <div className="absolute left-[1748px] top-[575px] w-[50px] h-[18px] bg-linear-to-b from-[#f6d52a] to-[#f0b818] text-[15.5px] leading-[18px] text-[#222] whitespace-nowrap pl-[2px]">
        7 525,<span className="relative -top-[4px] text-[9px]">2</span>
      </div>
      <div className="absolute left-[1748px] top-[596px] w-[34px] h-[14px] bg-[#90ec90] text-[10.5px] leading-[14px] text-[#222] pl-[2px]">3m24s</div>
    </>
  );
}

const BtnArrow = ({ dir }: { dir: "l" | "r" }) => (
  <div className="w-[13px] h-[17px] bg-[#c7dbe5] border border-[#7c97a5] flex items-center justify-center shrink-0">
    <span className={`w-0 h-0 border-y-[3.5px] border-y-transparent ${dir === "l" ? "border-r-[4px] border-r-[#111]" : "border-l-[4px] border-l-[#111]"}`} />
  </div>
);

function BottomBar() {
  return (
    <div className="h-[23px] bg-[#9db8c5] border-t border-[#6a8795] flex items-center">
      <div className="w-[23px] flex justify-center">
        <svg width="20" height="20" viewBox="0 0 22 20" fill="none"><path d="M3 5l4 10 3-6 3 6" stroke="#b03030" /><path d="M2 18h12" stroke="#2da03a" /><path d="M10 15l8-12 2 2-8 11z" fill="#f2c53a" stroke="#555" strokeWidth=".6" /></svg>
      </div>
      <div className="w-[13px] h-full bg-[#87a3b0] flex items-center justify-center"><span className="w-0 h-0 border-x-[3px] border-x-transparent border-t-[4px] border-t-[#111]" /></div>
      <div className="w-[5px]" />
      <div className="w-[27px] h-full bg-[#e8f3ee] flex items-center justify-center">
        <svg width="22" height="20" viewBox="0 0 22 20" fill="none"><path d="M1 10c4-9 7-6 9 0s6 5 10-3" stroke="#d9534f" /><path d="M1 7c4 8 7 7 10 1s6-6 10 2" stroke="#3da33d" /><path d="M2 19v-3M5 19v-4M8 19v-2M11 19v-5M14 19v-3M17 19v-4M20 19v-2" stroke="#2d8a3a" strokeWidth="2" /></svg>
      </div>
      <div className="w-[13px] h-full bg-[#e3edf1] flex items-center justify-center"><span className="w-0 h-0 border-x-[3px] border-x-transparent border-t-[4px] border-t-[#111]" /></div>
      <div className="w-[63px] h-full bg-[#2f91e0] flex items-center pl-[2px] gap-[2px] text-white text-[10.5px]">
        <svg width="15" height="16" viewBox="0 0 15 16" fill="none" stroke="#fff"><circle cx="3" cy="8" r="2.3" fill="#fff" /><circle cx="12" cy="3" r="2.3" fill="#fff" /><circle cx="12" cy="13" r="2.3" fill="#fff" /><path d="M3 8l9-5M3 8l9 5" strokeWidth="1.4" /></svg>
        Partager
      </div>
      <div className="w-[5px]" />
      <div className="w-[24px] flex justify-center"><svg width="18" height="20" viewBox="0 0 18 20"><rect x="1" y="1" width="12" height="10" fill="#cde" /><path d="M4 5h11a2 2 0 0 1 2 2v7a2 2 0 0 1-2 2h-4l-3 3v-3H4z" fill="#1f7ed8" /><path d="M6 10h2M10 10h2M14 10h1" stroke="#fff" strokeWidth="1.5" /></svg></div>
      <div className="w-[23px] flex justify-center"><svg width="16" height="20" viewBox="0 0 16 20" fill="none"><rect x="2" y="1" width="12" height="18" fill="#fff" stroke="#555" /><path d="M4 5h8M4 8h8M4 11h8M4 14h8" stroke="#333" /><path d="M3 12l4 5 3-4" stroke="#3da33d" strokeWidth="1.5" /><path d="M4 5h4" stroke="#d03030" strokeWidth="1.5" /></svg></div>
      <div className="w-[23px] flex justify-center"><svg width="18" height="20" viewBox="0 0 18 20"><path d="M1 2h7v4H1zM10 2h7v4h-7zM1 8h7v4H1zM10 14h7v4h-7z" fill="#e04040" /><path d="M10 8h7v4h-7zM1 14h7v4H1z" fill="#28a038" /></svg></div>
      <div className="w-[24px] flex justify-center"><svg width="20" height="20" viewBox="0 0 20 20" fill="none"><rect x="1" y="1" width="12" height="12" fill="#2860c8" /><rect x="6" y="6" width="13" height="13" fill="#fff" stroke="#1a50b8" strokeWidth="1.5" /><path d="M8 15l3-5 2 3 3-5" stroke="#3da33d" /></svg></div>
      <div className="w-[23px] flex justify-center"><svg width="18" height="20" viewBox="0 0 18 20"><path d="M4 3v15M12 1v17" stroke="#222" /><rect x="1" y="7" width="6" height="8" fill="#e04040" /><rect x="9" y="3" width="6" height="11" fill="#28a038" /><path d="M8 15l6-6 3 1-1 3-6 5z" fill="#eee" stroke="#222" strokeWidth=".7" /></svg></div>
      <div className="w-[14px] text-[#6a8795] text-[13px] text-center ml-[2px]">«</div>
      <div className="w-[3px]" />
      <BtnArrow dir="l" />
      <div className="h-[17px] flex-1 flex bg-[#98b6c3] border-y border-[#7c97a5]">
        <div className="w-[617px]" />
        <div className="flex-1 bg-linear-to-b from-[#c6e0ea] to-[#a8c9d6] border-l border-[#7c97a5]" />
      </div>
      <BtnArrow dir="r" />
      <div className="w-[100px] flex items-center justify-between pl-[4px] pr-[2px]">
        <svg width="24" height="22" viewBox="0 0 24 22" fill="none"><circle cx="8" cy="8" r="6" fill="#e8eef1" stroke="#222" strokeWidth="1.4" /><path d="M12 12l7 8" stroke="#111" strokeWidth="2.4" /><path d="M19 2v9M17 4l2-3 2 3M17 9l2 3 2-3" stroke="#1a50d8" /><path d="M1 20h9M3 18l-2 2 2 2M8 18l2 2-2 2" stroke="#1a50d8" /></svg>
        <svg width="20" height="20" viewBox="0 0 20 20" fill="none"><circle cx="8" cy="8" r="6" fill="#e8eef1" stroke="#222" strokeWidth="1.4" /><path d="M12 12l6 7" stroke="#111" strokeWidth="2.4" /><path d="M5 8h6" stroke="#1a50d8" strokeWidth="2" /></svg>
        <svg width="20" height="20" viewBox="0 0 20 20" fill="none"><circle cx="8" cy="8" r="6" fill="#e8eef1" stroke="#222" strokeWidth="1.4" /><path d="M12 12l6 7" stroke="#111" strokeWidth="2.4" /><path d="M5 8h6M8 5v6" stroke="#1a50d8" strokeWidth="2" /></svg>
        <svg width="18" height="20" viewBox="0 0 18 20" fill="none"><path d="M1 5h16" stroke="#333" strokeWidth="4" strokeDasharray="2 1" /><path d="M9 9v6" stroke="#1a50d8" strokeWidth="2" /><path d="M5 13h8l-4 4z" fill="#1a50d8" /></svg>
      </div>
    </div>
  );
}

const taskIcons: React.ReactNode[] = [
  <svg key="w" width="17" height="17" viewBox="0 0 17 17" fill="#fff"><path d="M0 2.4l7-1v7H0zM8 1.2l9-1.2v8.400H8zM0 9.400h7v6.600l-7-1zM8 9.400h9V17l-9-1.200z" /></svg>,
  <svg key="s" width="20" height="20" viewBox="0 0 20 20" fill="none" stroke="#eee" strokeWidth="1.4"><circle cx="12" cy="8" r="5.500" /><path d="M8 12l-6 6" /></svg>,
  <svg key="t" width="18" height="20" viewBox="0 0 18 20" fill="none" stroke="#eee" strokeWidth="1.4"><rect x="2" y="6" width="10" height="8" /><path d="M2 2h10M2 18h10M15 2v4M15 8v4M15 14v4" /></svg>,
  <svg key="b" width="22" height="26" viewBox="0 0 22 26"><path d="M2 1h18v18l-6 5h-6l-6-5z" fill="#1f7fc4" /><path d="M5 1h12v14l-6 4-6-4z" fill="#3ba0e0" /></svg>,
  <svg key="x" width="24" height="24" viewBox="0 0 24 24"><path d="M5 1h14l3 3v19H5z" fill="#d8e4f4" /><rect x="1" y="6" width="14" height="13" fill="#2b5cab" /><text x="8" y="16" fontSize="11" fontWeight="700" fill="#fff" textAnchor="middle" fontFamily="Liberation Sans">W</text><path d="M17 8h4M17 11h4M17 14h4" stroke="#6a8ac8" /></svg>,
  <svg key="p" width="24" height="20" viewBox="0 0 24 20"><path d="M6 2h12v5H6z" fill="#ddd" /><rect x="1" y="6" width="22" height="10" rx="2" fill="#b8b8b8" /><rect x="5" y="12" width="14" height="6" fill="#eee" /></svg>,
  <svg key="st" width="22" height="26" viewBox="0 0 22 26"><rect x="1" y="6" width="20" height="19" rx="2" fill="#f4f4f4" /><path d="M7 7V4a4 4 0 0 1 8 0v3" stroke="#2aa8e0" strokeWidth="1.6" fill="none" /><rect x="6" y="10" width="4" height="4" fill="#f25022" /><rect x="11" y="10" width="4" height="4" fill="#7fba00" /><rect x="6" y="15" width="4" height="4" fill="#00a4ef" /><rect x="11" y="15" width="4" height="4" fill="#ffb900" /></svg>,
  <svg key="sp" width="23" height="23" viewBox="0 0 23 23" fill="none"><circle cx="11.500" cy="11.500" r="11" fill="#1ed760" /><path d="M5 8c4-1 9-1 13 1.500M6 11.500c4-1 8-.6 11 1.200M7 15c3-.8 6-.4 9 1" stroke="#111" strokeWidth="1.800" strokeLinecap="round" /></svg>,
  <svg key="pa" width="24" height="26" viewBox="0 0 24 26"><path d="M12 5C6 5 1 9 1 14s5 8 9 8c3 0 2-3 4-3 3 0 8 0 8-6S17 5 12 5z" fill="#c3ccd8" /><circle cx="7" cy="12" r="1.800" fill="#e05050" /><circle cx="11" cy="9" r="1.800" fill="#4a90e0" /><circle cx="7" cy="17" r="1.800" fill="#50b050" /><path d="M17 19L21 1" stroke="#d8a060" strokeWidth="2" /></svg>,
  <svg key="fo" width="23" height="22" viewBox="0 0 23 22"><path d="M1 2h8l2 3h11v15H1z" fill="#f3c44c" /><rect x="1" y="7" width="21" height="13" fill="#f7d66a" /><rect x="6" y="13" width="11" height="7" fill="#2d8cd0" /></svg>,
  <svg key="sk" width="22" height="28" viewBox="0 0 22 28"><ellipse cx="11" cy="14" rx="10" ry="13" fill="#0f9de0" /><text x="11" y="20" fontSize="18" fontWeight="700" fill="#fff" textAnchor="middle" fontFamily="Liberation Sans">S</text></svg>,
  <svg key="c" width="18" height="28" viewBox="0 0 18 28"><rect x="0" y="0" width="18" height="28" rx="1" fill="#7a8a94" /><rect x="3" y="3" width="12" height="6" fill="#6fc4e8" /><path d="M3 13h3v3H3zM8 13h3v3H8zM13 13h3v3h-3zM3 18h3v3H3zM8 18h3v3H8zM13 18h3v3h-3zM3 23h3v3H3zM8 23h3v3H8zM13 23h3v3h-3z" fill="#d5dde2" /></svg>,
  <svg key="ch" width="26" height="26" viewBox="0 0 26 26"><circle cx="13" cy="13" r="12.500" fill="#2ba24c" /><path d="M13 .5a12.500 12.500 0 0 1 11 6.500H13A6 6 0 0 0 7 10L3.500 5A12.500 12.500 0 0 1 13 .5z" fill="#e04a3a" /><path d="M24 7a12.500 12.500 0 0 1-12 18.500l5.500-9A6 6 0 0 0 18 7z" fill="#f8c830" /><circle cx="13" cy="13" r="5.500" fill="#fff" /><circle cx="13" cy="13" r="4.300" fill="#3a80e8" /></svg>,
  <svg key="ap" width="20" height="26" viewBox="0 0 20 26"><path d="M5 9v15M15 1v20" stroke="#555" /><rect x="1" y="11" width="7" height="10" fill="#f0606a" /><rect x="11" y="4" width="7" height="13" fill="#3ee060" /></svg>,
];

function Taskbar() {
  return (
    <div className="h-[38px] bg-[#101010] flex items-stretch">
      {taskIcons.map((n, i) => (
        <div
          key={i}
          className={`relative flex items-center justify-center shrink-0 ${i === 0 ? "w-[42px] pr-[3px]" : "w-[46px]"} ${i === 13 ? "bg-[#2c2c2c]" : ""}`}
        >
          {n}
          {(i === 9 || i === 12) && <div className="absolute bottom-0 left-[5px] right-[5px] h-[2px] bg-[#a8a8a8]" />}
          {i === 13 && <div className="absolute bottom-0 left-0 right-0 h-[2px] bg-[#a8a8a8]" />}
        </div>
      ))}
      <div className="flex-1" />
      <div className="flex flex-col justify-center items-end pr-[5px] text-[#e8e8e8] text-[12px] leading-[17px]">
        <div className="pr-[15px]">11:21</div>
        <div>20/04/2023</div>
      </div>
    </div>
  );
}

export default function App() {
  return (
    <div className="w-[1800px] h-[1014px] overflow-hidden bg-white flex flex-col font-['Liberation_Sans',Arial,sans-serif] blur-[0.35px]">
      <TopBar />
      <ToolBar />
      <InstrumentBar />
      <InfoBar />
      <div className="relative h-[831px] bg-white">
        <Chart />
        <Legend />
        <Tags />
      </div>
      <BottomBar />
      <Taskbar />
    </div>
  );
}
